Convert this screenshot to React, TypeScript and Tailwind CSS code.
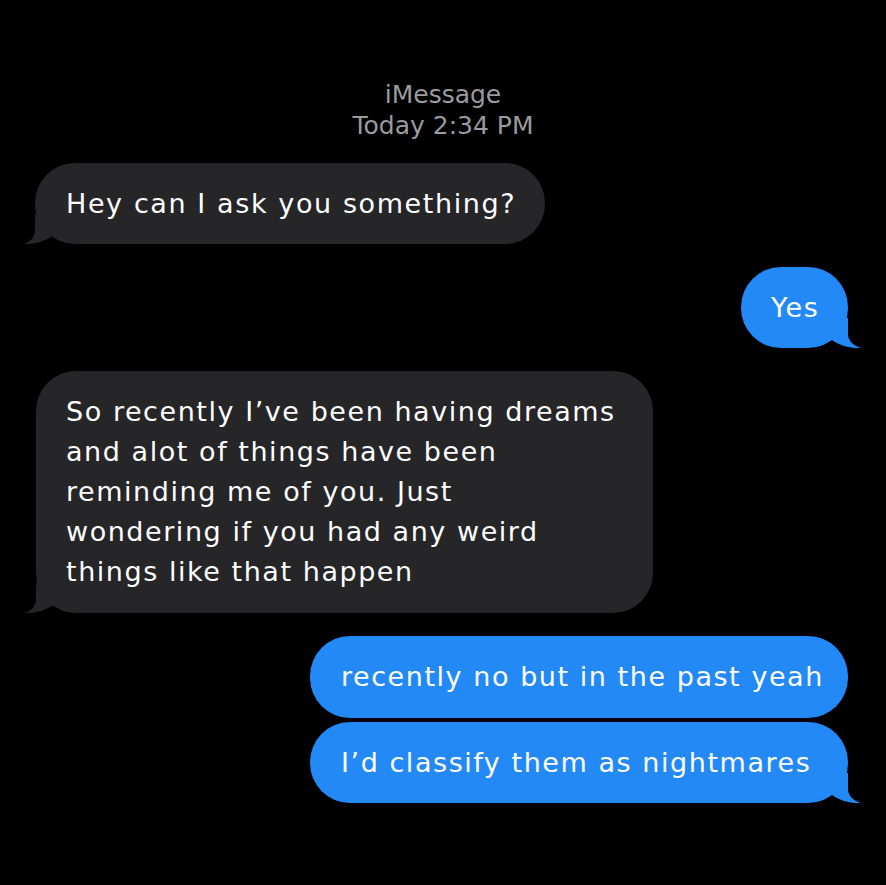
import React from "react";

function LeftTail({ color }: { color: string }) {
  return (
    <svg
      className="absolute bottom-0 left-[-11px]"
      width="40"
      height="30"
      viewBox="0 0 40 30"
    >
      <path
        d="M 11 0 L 11 16 C 11 23 6 28 0 30 C 9 30.5 20 28 28 22 L 40 22 L 40 0 Z"
        fill={color}
      />
    </svg>
  );
}

function RightTail({ color }: { color: string }) {
  return (
    <svg
      className="absolute bottom-0 right-[-13px]"
      width="42"
      height="30"
      viewBox="0 0 42 30"
    >
      <path
        d="M 29 0 L 29 16 C 29 23 35 28 42 30 C 32 30.5 21 28 13 22 L 0 22 L 0 0 Z"
        fill={color}
      />
    </svg>
  );
}

const GRAY = "#262628";
const BLUE = "#2389f6";

export default function App() {
  return (
    <div
      className="w-[886px] h-[885px] bg-black flex flex-col text-white"
      style={{ fontFamily: "'DejaVu Sans', 'Noto Sans', sans-serif" }}
    >
      <div className="pt-[79px] flex flex-col items-center text-[#9a9a9f] text-[25px] leading-[31px]">
        <div>iMessage</div>
        <div>Today 2:34 PM</div>
      </div>

      <div className="mt-[22px] pl-[35px] flex">
        <div className="relative">
          <LeftTail color={GRAY} />
          <div className="relative bg-[#262628] rounded-[40px] pl-[31px] pr-[29px] py-[20.5px] text-[27px] leading-[40px] tracking-[1.6px] whitespace-nowrap">
            Hey can I ask you something?
          </div>
        </div>
      </div>

      <div className="mt-[23px] pr-[38px] flex justify-end">
        <div className="relative">
          <RightTail color={BLUE} />
          <div className="relative bg-[#2389f6] rounded-[40px] pl-[30px] pr-[28.5px] py-[20.5px] text-[27px] leading-[40px] tracking-[1.6px] whitespace-nowrap">
            Yes
          </div>
        </div>
      </div>

      <div className="mt-[23px] pl-[36px] flex">
        <div className="relative">
          <LeftTail color={GRAY} />
          <div className="relative bg-[#262628] rounded-[40px] w-[617px] px-[30px] py-[21px] text-[27px] leading-[40px] tracking-[1.55px] whitespace-nowrap">
            <div>So recently I’ve been having dreams</div>
            <div>and alot of things have been</div>
            <div>reminding me of you. Just</div>
            <div>wondering if you had any weird</div>
            <div>things like that happen</div>
          </div>
        </div>
      </div>

      <div className="mt-[23px] pr-[38px] flex flex-col items-end gap-[4px]">
        <div className="relative">
          <div className="relative bg-[#2389f6] rounded-[40px] w-[538px] px-[31px] py-[21px] text-[27px] leading-[40px] tracking-[1.55px] whitespace-nowrap">
            recently no but in the past yeah
          </div>
        </div>
        <div className="relative">
          <RightTail color={BLUE} />
          <div className="relative bg-[#2389f6] rounded-[40px] w-[538px] px-[31px] py-[20.5px] text-[27px] leading-[40px] tracking-[1.55px] whitespace-nowrap">
            I’d classify them as nightmares
          </div>
        </div>
      </div>
    </div>
  );
}
